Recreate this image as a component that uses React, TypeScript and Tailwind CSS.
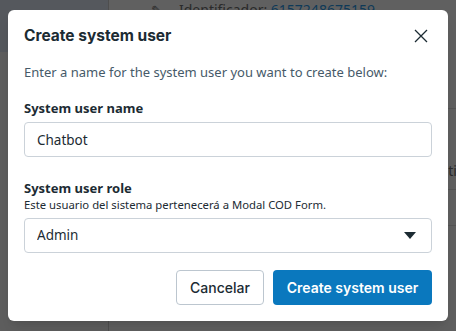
import React, { useState } from "react";

function Background() {
	return (
		<div className="flex h-[331px] w-[456px] bg-[#606060]">
			<div className="flex w-[109px] flex-col border-r border-[#4e4e4e]">
				<div className="h-[52px] bg-[#55585d]" />
				<div className="flex-1 bg-[#5e5e5e]" />
			</div>
			<div className="flex flex-1 flex-col [font-family:'Noto_Sans',sans-serif] text-[#2a2a2a]">
				<div className="flex h-[109px] items-start border-b border-[#555] pl-[42px] text-[14px] leading-[20px]">
					<span className="w-[28px] text-[13px]">✎</span>
					<span>
						Identificador: <span className="text-[#0f3a58]">6157248675159</span>
					</span>
				</div>
				<div className="flex h-[81px] items-end justify-end border-b border-[#555] pb-[8px] text-[14px]">
					<span className="-mr-[8px]">tiv</span>
				</div>
				<div className="h-[36px] border-b border-[#555]" />
				<div className="flex-1" />
			</div>
		</div>
	);
}

function Modal() {
	const [name, setName] = useState("Chatbot");
	const [role, setRole] = useState("Admin");

	return (
		<div className="absolute left-[8px] top-[10px] w-[440px] rounded-md bg-white px-4 pb-4 shadow-lg">
			<div className="flex h-[52px] items-center justify-between">
				<h1 className="text-[15.5px] font-bold text-[#1c2b33] [font-family:Inter,sans-serif]">
					Create system user
				</h1>
				<button className="mr-[4px] text-[#1c2b33]">
					<svg width="14" height="14" viewBox="0 0 14 14" fill="none" stroke="currentColor" strokeWidth="1.3">
						<path d="M1 1L13 13M13 1L1 13" />
					</svg>
				</button>
			</div>
			<div className="[font-family:'Noto_Sans',sans-serif] text-[#1c2b33]">
				<p className="text-[13px] leading-[20px] text-[#465a69]">
					Enter a name for the system user you want to create below:
				</p>
				<label htmlFor="name" className="mt-[16px] block text-[13px] font-bold leading-[20px]">
					System user name
				</label>
				<input
					id="name"
					value={name}
					onChange={(e) => setName(e.currentTarget.value)}
					className="mt-[4px] h-[35px] w-full rounded-[4px] border border-[#cbd2d9] px-3 text-[13.5px] text-[#1c2b33] outline-none"
				/>
				<label htmlFor="role" className="mt-[22px] block text-[13px] font-bold leading-[18px]">
					System user role
				</label>
				<p className="text-[11.3px] leading-[16px] text-[#1c2b33]">
					Este usuario del sistema pertenecerá a Modal COD Form.
				</p>
				<div className="relative mt-[5px]">
					<select
						id="role"
						value={role}
						onChange={(e) => setRole(e.currentTarget.value)}
						className="h-[35px] w-full appearance-none rounded-[4px] border border-[#cbd2d9] bg-white px-3 text-[13.5px] text-[#1c2b33] outline-none"
					>
						<option>Admin</option>
						<option>Employee</option>
					</select>
					<svg
						className="pointer-events-none absolute right-[16px] top-[14px]"
						width="12"
						height="7"
						viewBox="0 0 12 7"
						fill="#1c2b33"
					>
						<path d="M0 0H12L6 7Z" />
					</svg>
				</div>
			</div>
			<div className="mt-[17px] flex justify-end gap-[9px] [font-family:Inter,sans-serif]">
				<button className="h-[35px] w-[88px] rounded-[4px] border border-[#bcc6cf] bg-white text-[14px] font-medium text-[#1c2b33]">
					Cancelar
				</button>
				<button className="h-[35px] w-[159px] rounded-[4px] bg-[#0a78be] text-[14px] font-semibold text-white">
					Create system user
				</button>
			</div>
		</div>
	);
}

export default function App() {
	return (
		<div className="relative h-[331px] w-[456px] overflow-hidden">
			<Background />
			<Modal />
		</div>
	);
}
